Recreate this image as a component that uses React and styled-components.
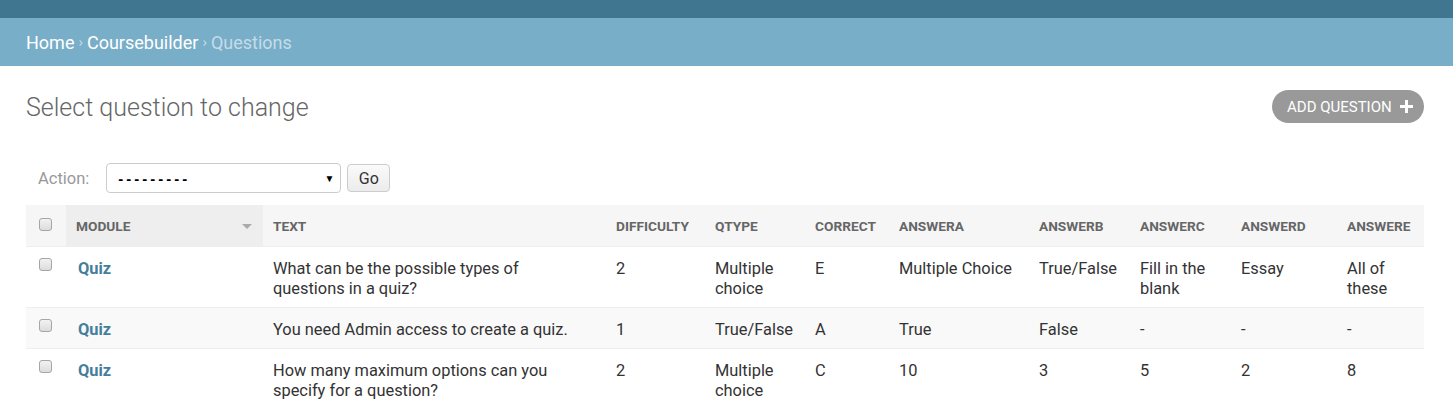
import React from "react";
import styled, { createGlobalStyle } from "styled-components";

const Global = createGlobalStyle`
  html, body { margin: 0; padding: 0; background: #fff; }
  body { font-family: Roboto, "Liberation Sans", sans-serif; color: #333; }
`;

const TopBar = styled.div`
  height: 18px;
  background: #417690;
`;

const Crumbs = styled.div`
  height: 48px;
  background: #79aec8;
  display: flex;
  align-items: center;
  padding: 0 26px;
  font-size: 18px;
  color: #fff;
`;

const CrumbLink = styled.a`
  color: #fff;
  text-decoration: none;
`;

const Sep = styled.span`
  margin: 0 4px;
  color: #c4dce8;
  font-size: 15px;
`;

const Current = styled.span`
  color: #c4dce8;
`;

const Content = styled.div`
  padding: 24px 29px 0 26px;
`;

const TitleRow = styled.div`
  display: flex;
  justify-content: space-between;
  align-items: flex-start;
`;

const Title = styled.h1`
  margin: 3px 0 0;
  font-size: 25px;
  font-weight: 300;
  color: #666;
`;

const AddButton = styled.a`
  display: flex;
  align-items: center;
  gap: 8px;
  width: 152px;
  height: 33px;
  box-sizing: border-box;
  padding: 0 10px 0 15px;
  border-radius: 17px;
  background: #999;
  color: #fff;
  font-size: 15px;
  text-transform: uppercase;
  text-decoration: none;
  white-space: nowrap;
`;

const Actions = styled.div`
  margin-top: 34px;
  height: 42px;
  display: flex;
  align-items: center;
  padding: 0 12px;
  gap: 6px;
  background: #fff;
`;

const ActionLabel = styled.span`
  color: #999;
  font-size: 16.5px;
  margin-right: 11px;
`;

const Select = styled.div`
  width: 235px;
  height: 30px;
  box-sizing: border-box;
  border: 1px solid #ccc;
  border-radius: 4px;
  display: flex;
  align-items: center;
  justify-content: space-between;
  padding: 0 6px 0 11px;
  font-family: "Liberation Sans", Arial, sans-serif;
  font-size: 15px;
  color: #000;
`;

const Dashes = styled.span`
  letter-spacing: 3px;
  font-weight: 700;
`;

const Arrow = styled.span`
  font-size: 10px;
`;

const GoButton = styled.button`
  height: 28px;
  width: 43px;
  border: 1px solid #ccc;
  border-radius: 4px;
  background: linear-gradient(#fafafa, #ececec);
  font-family: Roboto, sans-serif;
  font-size: 16px;
  color: #333;
  padding: 0;
`;

const Table = styled.table`
  margin-top: 6px;
  width: 1398px;
  border-collapse: collapse;
  table-layout: fixed;
`;

const Th = styled.th`
  height: 41px;
  padding: 0 10px;
  text-align: left;
  font-size: 13.7px;
  font-weight: 700;
  text-transform: uppercase;
  color: #666;
  background: ${(p) => (p.$sorted ? "#eee" : "#f6f6f6")};
  border-bottom: 1px solid #eee;
  position: relative;
  vertical-align: middle;
  white-space: nowrap;
`;

const SortArrow = styled.span`
  position: absolute;
  right: 11px;
  top: 19px;
  width: 0;
  height: 0;
  border-left: 5px solid transparent;
  border-right: 5px solid transparent;
  border-top: 5px solid #aaa;
`;

const Tr = styled.tr`
  background: ${(p) => (p.$alt ? "#f9f9f9" : "#fff")};
`;

const Td = styled.td`
  padding: 12px ${(p) => (p.$narrow ? "30px" : "10px")} 8px 10px;
  font-size: 16.4px;
  line-height: 20px;
  vertical-align: top;
  border-bottom: 1px solid #eee;
  color: #333;
`;

const CheckCell = styled.td`
  padding: 11px 0 0 13px;
  vertical-align: top;
  border-bottom: 1px solid #eee;
`;

const CheckTh = styled.th`
  padding: 0 0 0 13px;
  background: #f6f6f6;
  border-bottom: 1px solid #eee;
  vertical-align: middle;
  text-align: left;
`;

const Check = styled.span`
  display: block;
  width: 13px;
  height: 13px;
  box-sizing: border-box;
  border: 1px solid #a6a6a6;
  border-radius: 3px;
  background: linear-gradient(#f2f2f2, #dcdcdc);
  margin-top: ${(p) => (p.$head ? "-3px" : "0")};
`;

const ModuleLink = styled.a`
  color: #447e9b;
  font-weight: 700;
  text-decoration: none;
  padding-left: 2px;
`;

const cols = [
  { key: "check", w: 40 },
  { key: "module", w: 197, label: "Module" },
  { key: "text", w: 343, label: "Text" },
  { key: "difficulty", w: 99, label: "Difficulty" },
  { key: "qtype", w: 100, label: "Qtype" },
  { key: "correct", w: 84, label: "Correct" },
  { key: "answera", w: 140, label: "Answera" },
  { key: "answerb", w: 101, label: "Answerb" },
  { key: "answerc", w: 101, label: "Answerc" },
  { key: "answerd", w: 106, label: "Answerd" },
  { key: "answere", w: 87, label: "Answere" },
];

const rows = [
  ["What can be the possible types of questions in a quiz?", "2", "Multiple choice", "E", "Multiple Choice", "True/False", "Fill in the blank", "Essay", "All of these"],
  ["You need Admin access to create a quiz.", "1", "True/False", "A", "True", "False", "-", "-", "-"],
  ["How many maximum options can you specify for a question?", "2", "Multiple choice", "C", "10", "3", "5", "2", "8"],
];

function Plus() {
  return (
    <svg width="13" height="13" viewBox="0 0 13 13">
      <path d="M5 0h3v5h5v3H8v5H5V8H0V5h5z" fill="#fff" />
    </svg>
  );
}

export default function App() {
  return (
    <>
      <Global />
      <TopBar />
      <Crumbs>
        <CrumbLink>Home</CrumbLink>
        <Sep>›</Sep>
        <CrumbLink>Coursebuilder</CrumbLink>
        <Sep>›</Sep>
        <Current>Questions</Current>
      </Crumbs>
      <Content>
        <TitleRow>
          <Title>Select question to change</Title>
          <AddButton>
            Add question <Plus />
          </AddButton>
        </TitleRow>
        <Actions>
          <ActionLabel>Action:</ActionLabel>
          <Select>
            <Dashes>---------</Dashes>
            <Arrow>▼</Arrow>
          </Select>
          <GoButton>Go</GoButton>
        </Actions>
        <Table>
          <colgroup>
            {cols.map((c) => (
              <col key={c.key} style={{ width: c.w }} />
            ))}
          </colgroup>
          <thead>
            <tr>
              <CheckTh>
                <Check $head />
              </CheckTh>
              {cols.slice(1).map((c) => (
                <Th key={c.key} $sorted={c.key === "module"}>
                  {c.label}
                  {c.key === "module" && <SortArrow />}
                </Th>
              ))}
            </tr>
          </thead>
          <tbody>
            {rows.map((r, i) => (
              <Tr key={i} $alt={i % 2 === 1}>
                <CheckCell>
                  <Check />
                </CheckCell>
                <Td>
                  <ModuleLink>Quiz</ModuleLink>
                </Td>
                {r.map((v, j) => (
                  <Td key={j} $narrow={j === 0}>
                    {v}
                  </Td>
                ))}
              </Tr>
            ))}
          </tbody>
        </Table>
      </Content>
    </>
  );
}
